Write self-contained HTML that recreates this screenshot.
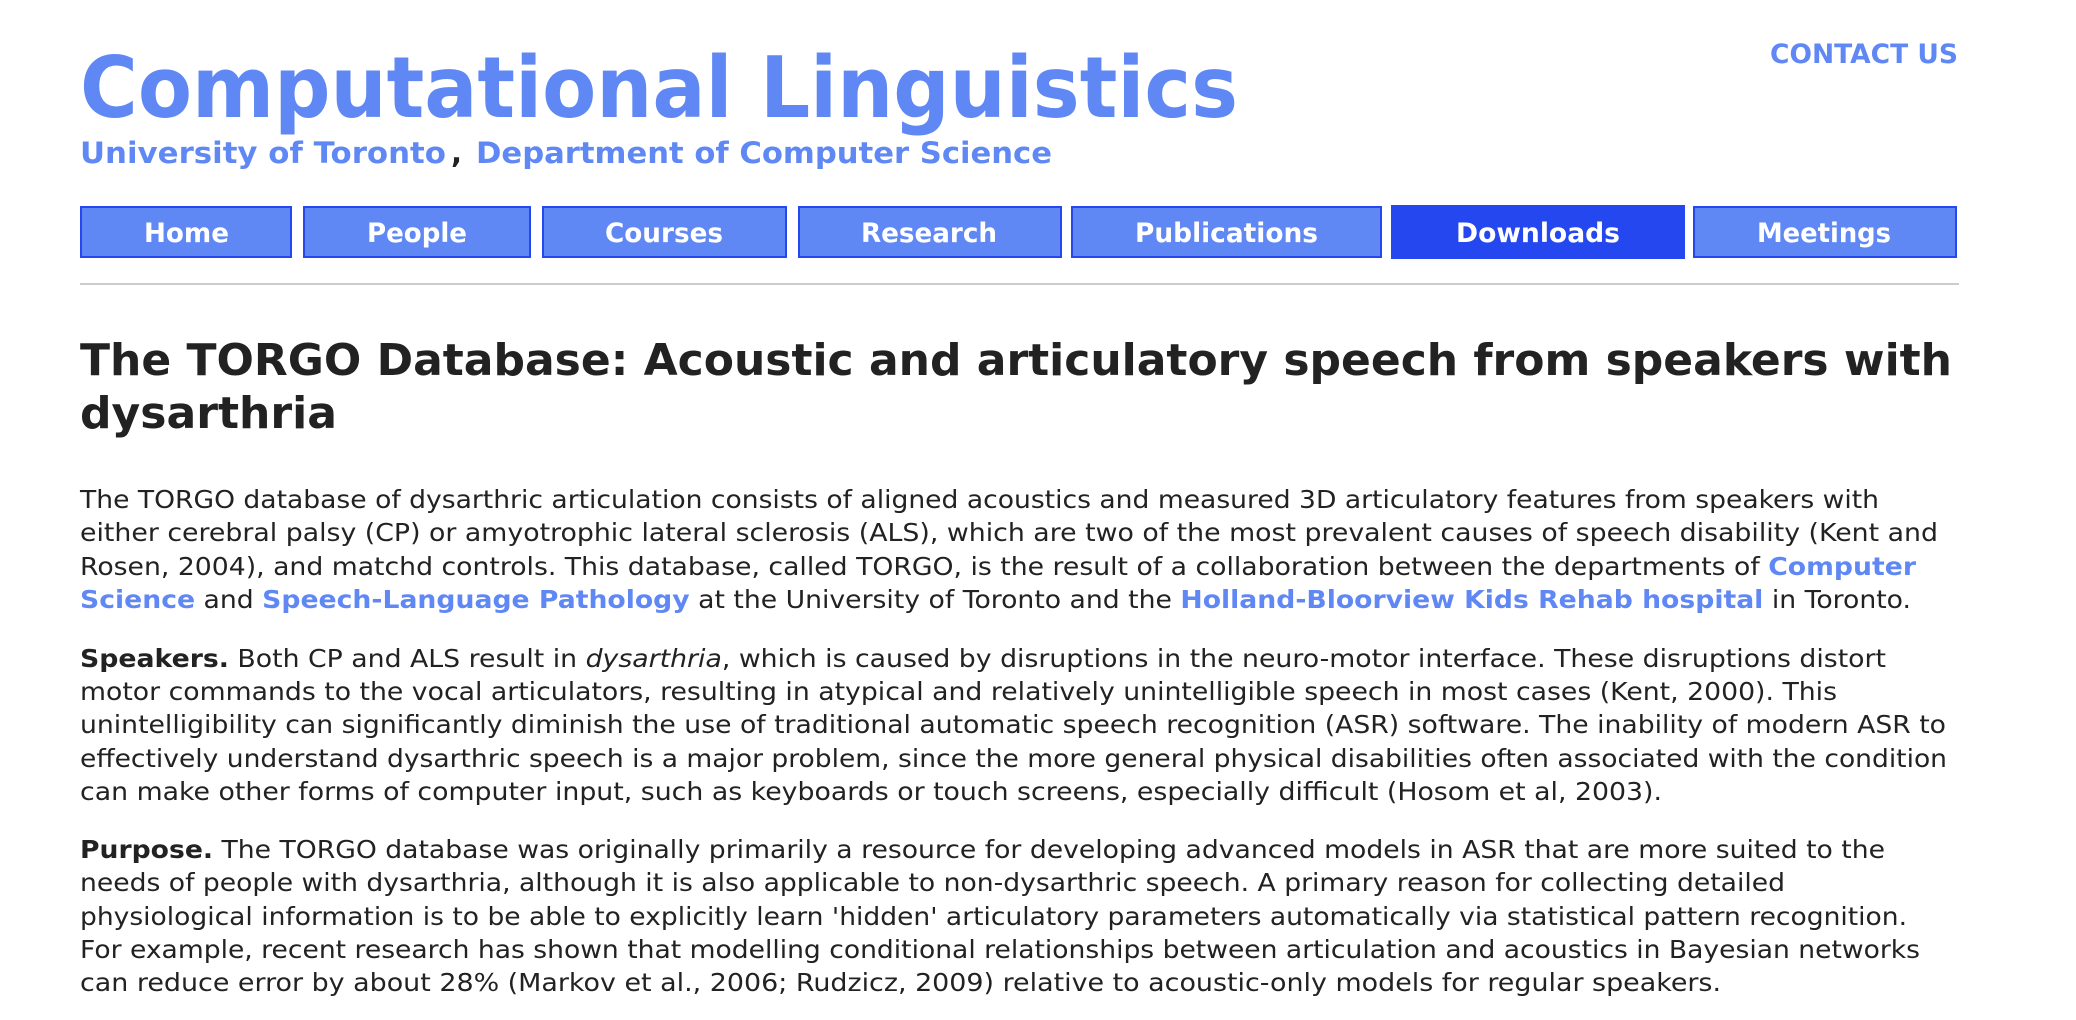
<!DOCTYPE html>
<html><head><meta charset="utf-8"><style>
html,body{margin:0;padding:0;background:#fff;}
svg{display:block;}
.t{font-family:"DejaVu Sans","Liberation Sans",sans-serif;}
.b{font-weight:bold;}
.blue{fill:#6088f5;}
.body{font-size:25px;fill:#222;}
</style></head><body>
<svg width="2076" height="1020" viewBox="0 0 2076 1020" xmlns="http://www.w3.org/2000/svg">
<text class="t b blue" x="80" y="117" font-size="85" textLength="1158" lengthAdjust="spacingAndGlyphs">Computational Linguistics</text>
<text class="t b blue" x="80" y="163" font-size="29" textLength="366" lengthAdjust="spacingAndGlyphs">University of Toronto</text>
<text class="t b" x="451" y="163" font-size="29" fill="#222">,</text>
<text class="t b blue" x="476" y="163" font-size="29" textLength="576" lengthAdjust="spacingAndGlyphs">Department of Computer Science</text>
<text class="t b blue" x="1770" y="63" font-size="27" textLength="188" lengthAdjust="spacingAndGlyphs">CONTACT US</text>

<g fill="#6088f5" stroke="#2447f0" stroke-width="2">
<rect x="81" y="207" width="210" height="50"/>
<rect x="304" y="207" width="226" height="50"/>
<rect x="543" y="207" width="243" height="50"/>
<rect x="799" y="207" width="262" height="50"/>
<rect x="1072" y="207" width="309" height="50"/>
<rect x="1392" y="206" width="292" height="52" fill="#2447f0"/>
<rect x="1694" y="207" width="262" height="50"/>
</g>
<g class="t b" font-size="27" fill="#fff">
<text x="144" y="242" textLength="85" lengthAdjust="spacingAndGlyphs">Home</text>
<text x="367" y="242" textLength="100" lengthAdjust="spacingAndGlyphs">People</text>
<text x="605" y="242" textLength="118" lengthAdjust="spacingAndGlyphs">Courses</text>
<text x="861" y="242" textLength="136" lengthAdjust="spacingAndGlyphs">Research</text>
<text x="1135" y="242" textLength="183" lengthAdjust="spacingAndGlyphs">Publications</text>
<text x="1456" y="242" textLength="164" lengthAdjust="spacingAndGlyphs">Downloads</text>
<text x="1757" y="242" textLength="134" lengthAdjust="spacingAndGlyphs">Meetings</text>
</g>
<rect x="80" y="283" width="1879" height="2" fill="#cccccc"/>

<g class="t b" font-size="44" fill="#222">
<text x="80" y="375" textLength="1872" lengthAdjust="spacingAndGlyphs">The TORGO Database: Acoustic and articulatory speech from speakers with</text>
<text x="80" y="428" textLength="257" lengthAdjust="spacingAndGlyphs">dysarthria</text>
</g>

<g class="t body">
<text x="80" y="508" textLength="1799" lengthAdjust="spacingAndGlyphs">The TORGO database of dysarthric articulation consists of aligned acoustics and measured 3D articulatory features from speakers with</text>
<text x="80" y="541" textLength="1858" lengthAdjust="spacingAndGlyphs">either cerebral palsy (CP) or amyotrophic lateral sclerosis (ALS), which are two of the most prevalent causes of speech disability (Kent and</text>
<text x="80" y="575" textLength="1836" lengthAdjust="spacingAndGlyphs">Rosen, 2004), and matchd controls. This database, called TORGO, is the result of a collaboration between the departments of <tspan class="b blue">Computer</tspan></text>
<text x="80" y="608" textLength="1831" lengthAdjust="spacingAndGlyphs"><tspan class="b blue">Science</tspan> and <tspan class="b blue">Speech-Language Pathology</tspan> at the University of Toronto and the <tspan class="b blue">Holland-Bloorview Kids Rehab hospital</tspan> in Toronto.</text>

<text x="80" y="667" textLength="1806" lengthAdjust="spacingAndGlyphs"><tspan class="b">Speakers.</tspan> Both CP and ALS result in <tspan font-style="italic">dysarthria</tspan>, which is caused by disruptions in the neuro-motor interface. These disruptions distort</text>
<text x="80" y="700" textLength="1757" lengthAdjust="spacingAndGlyphs">motor commands to the vocal articulators, resulting in atypical and relatively unintelligible speech in most cases (Kent, 2000). This</text>
<text x="80" y="733" textLength="1866" lengthAdjust="spacingAndGlyphs">unintelligibility can significantly diminish the use of traditional automatic speech recognition (ASR) software. The inability of modern ASR to</text>
<text x="80" y="767" textLength="1867" lengthAdjust="spacingAndGlyphs">effectively understand dysarthric speech is a major problem, since the more general physical disabilities often associated with the condition</text>
<text x="80" y="800" textLength="1582" lengthAdjust="spacingAndGlyphs">can make other forms of computer input, such as keyboards or touch screens, especially difficult (Hosom et al, 2003).</text>

<text x="80" y="858" textLength="1805" lengthAdjust="spacingAndGlyphs"><tspan class="b">Purpose.</tspan> The TORGO database was originally primarily a resource for developing advanced models in ASR that are more suited to the</text>
<text x="80" y="891" textLength="1705" lengthAdjust="spacingAndGlyphs">needs of people with dysarthria, although it is also applicable to non-dysarthric speech. A primary reason for collecting detailed</text>
<text x="80" y="925" textLength="1827" lengthAdjust="spacingAndGlyphs">physiological information is to be able to explicitly learn 'hidden' articulatory parameters automatically via statistical pattern recognition.</text>
<text x="80" y="958" textLength="1840" lengthAdjust="spacingAndGlyphs">For example, recent research has shown that modelling conditional relationships between articulation and acoustics in Bayesian networks</text>
<text x="80" y="991" textLength="1641" lengthAdjust="spacingAndGlyphs">can reduce error by about 28% (Markov et al., 2006; Rudzicz, 2009) relative to acoustic-only models for regular speakers.</text>
</g>
</svg>
</body></html>
